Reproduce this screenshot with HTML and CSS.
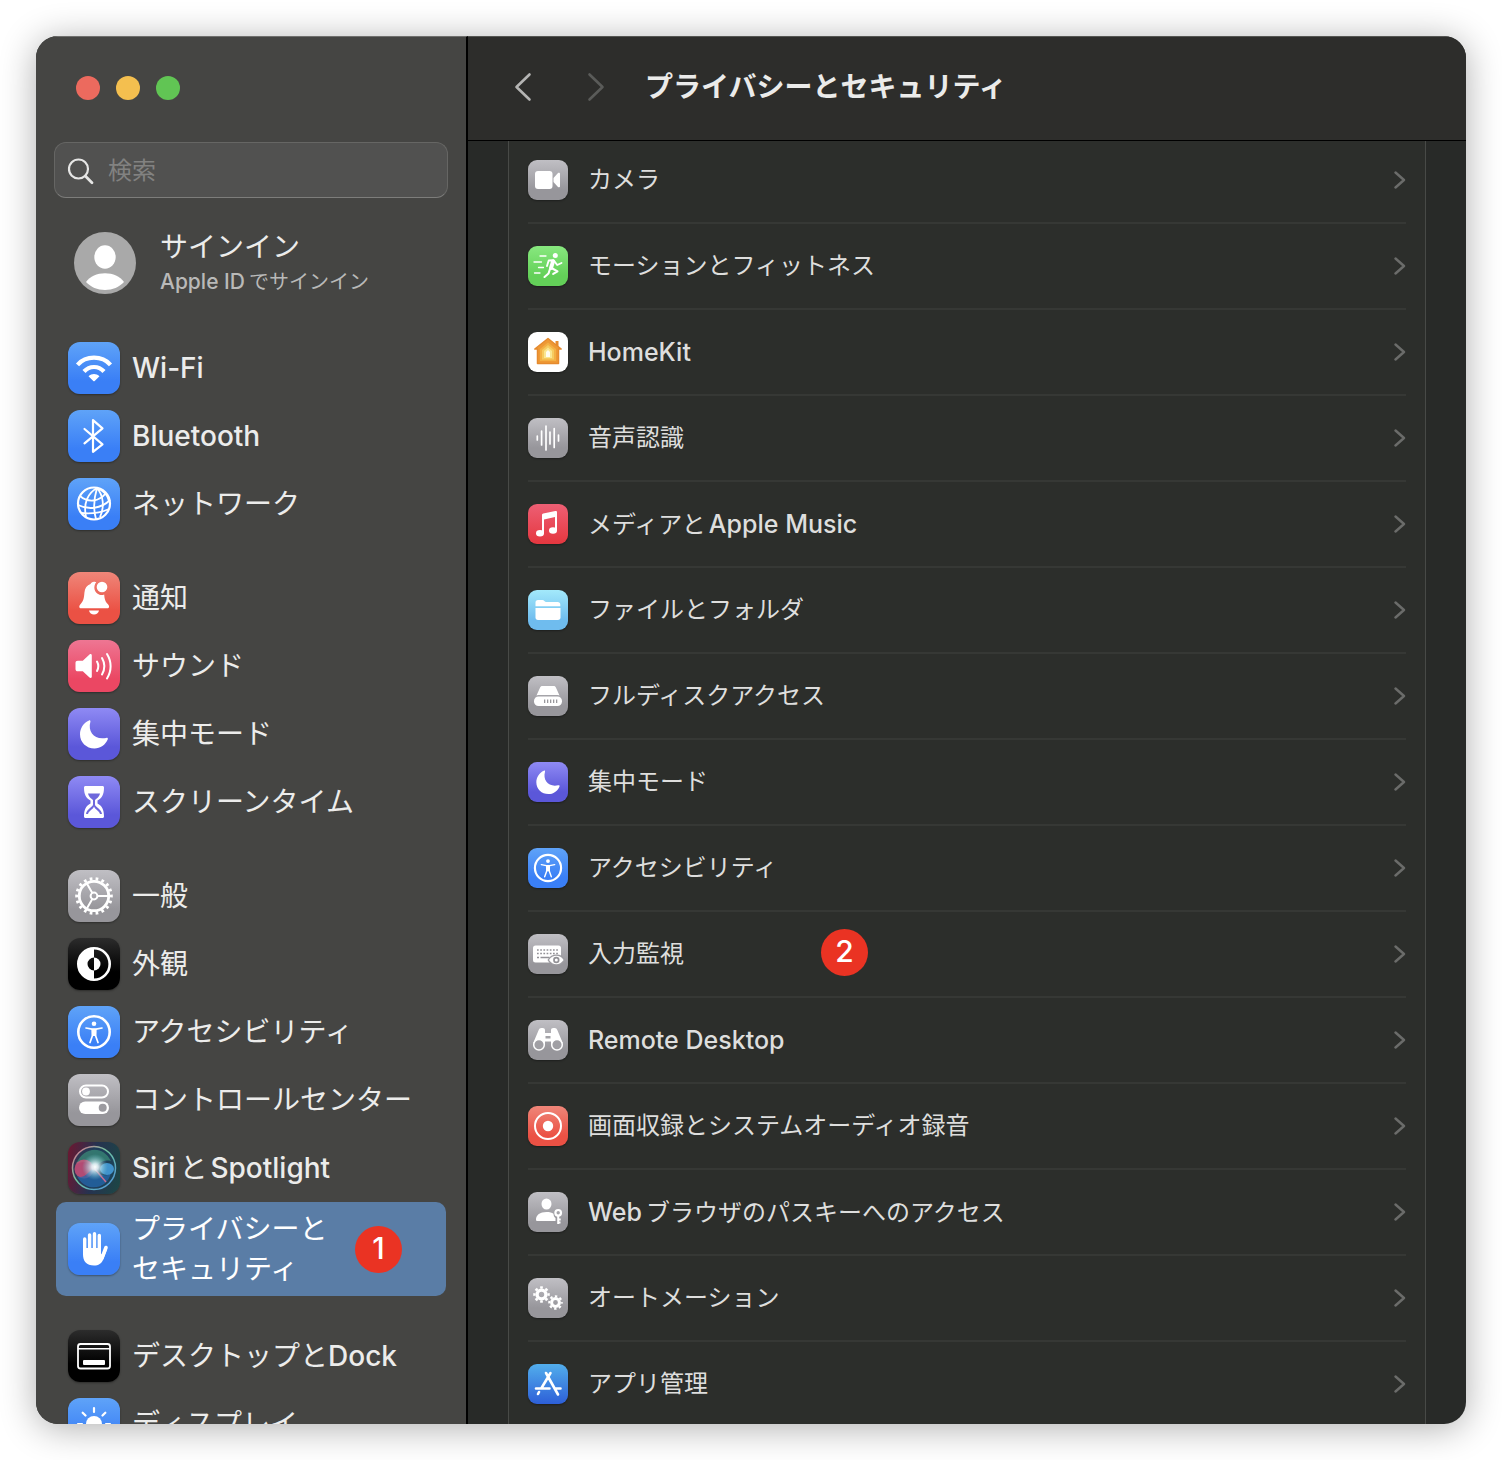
FILE: index.html
```html
<!DOCTYPE html>
<html lang="ja">
  <head>
    <meta charset="UTF-8" />
    <meta name="viewport" content="width=device-width, initial-scale=1.0" />
    <title>プライバシーとセキュリティ</title>
    <link rel="stylesheet" href="styles.css">
  </head>
  <body>
    <!-- Shared shapes -->
    <svg class="defs" width="0" height="0" aria-hidden="true">
      <symbol id="chevron" viewBox="0 0 12 20">
        <path d="M1.500 2.500l8.500 7.500-8.500 7.500" fill="none" stroke="currentColor" stroke-width="2.400" stroke-linecap="round" stroke-linejoin="round" />
      </symbol>
      <symbol id="moon" viewBox="0 0 52 52">
        <path d="M21 12.500c.8-.5 1.700.2 1.400 1.200-3 10.300 4.600 18.800 15.800 16.200 1.200-.3 2 .4 1.600 1.400C37.500 37 32.300 40.500 26.500 40.500 18.300 40.500 12 34.500 12 26.300c0-6 3.500-11.400 9-13.800z" fill="#fff" />
      </symbol>
      <symbol id="person" viewBox="0 0 52 52">
        <circle cx="26" cy="26" r="15.700" fill="none" stroke="#fff" stroke-width="2.600" />
        <circle cx="26" cy="17.700" r="2.300" fill="#fff" />
        <path d="M18 22l6 1.200h4L34 22M24.500 23.500v6L22 36.500M27.500 23.500v6l2.500 7" fill="none" stroke="#fff" stroke-width="1.700" stroke-linecap="round" stroke-linejoin="round" />
        <path d="M23.500 22.800h5l-.3 7.200h-4.400z" fill="#fff" />
      </symbol>
      <symbol id="cog" viewBox="0 0 20 20">
        <circle cx="10" cy="10" r="5.200" fill="none" stroke="#fff" stroke-width="4" />
        <circle cx="10" cy="10" r="8.300" fill="none" stroke="#fff" stroke-width="2.800" pathLength="16" stroke-dasharray="1 1" stroke-dashoffset=".5" />
      </symbol>
    </svg>

    <div class="window">
      <aside class="sidebar">
        <div class="lights">
          <button class="light red" aria-label="閉じる"></button>
          <button class="light yellow" aria-label="しまう"></button>
          <button class="light green" aria-label="拡大"></button>
        </div>

        <label class="search">
          <svg width="28" height="28" viewBox="0 0 28 28" aria-hidden="true">
            <circle cx="11.500" cy="12" r="9.500" fill="none" stroke="#e6e6e5" stroke-width="2.200" />
            <path d="M18.300 19l6.700 6.700" stroke="#e6e6e5" stroke-width="2.800" stroke-linecap="round" />
          </svg>
          <input type="search" placeholder="検索" aria-label="検索" />
        </label>

        <a class="account" href="#">
          <svg width="62" height="62" viewBox="0 0 62 62" aria-hidden="true">
            <circle cx="31" cy="31" r="31" fill="#a9a9a9" />
            <ellipse cx="31" cy="25" rx="10.700" ry="11.700" fill="#fff" />
            <path d="M12 50c4-5.500 11-8.700 19-8.700S46 44.500 50 50c-4.600 5-11.500 8-19 8s-14.400-3-19-8z" fill="#fff" />
          </svg>
          <span class="account-text">
            <span class="account-name">サインイン</span>
            <span class="account-sub"><span class="latin">Apple ID</span><span class="kana-after">で</span>サインイン</span>
          </span>
        </a>

        <nav>
          <div class="nav-group">
            <a class="nav-item" href="#">
              <span class="tile blue">
                <svg viewBox="0 0 52 52" aria-hidden="true">
                  <g fill="none" stroke="#fff" stroke-width="4.200">
                    <path d="M9.500 22.800C18 13.300 34 13.300 42.500 22.800" />
                    <path d="M16 29.500c5.500-6 14.500-6 20 0" />
                  </g>
                  <path d="M20.500 34.300c3.300-3 7.700-3 11 0L26.700 39c-.4.4-1 .4-1.400 0z" fill="#fff" />
                </svg>
              </span>
              <span class="latin">Wi-Fi</span>
            </a>
            <a class="nav-item" href="#">
              <span class="tile blue">
                <svg viewBox="0 0 52 52" aria-hidden="true">
                  <path d="M16.500 19l18 15.300L25 41.800V10.200l9.500 8.100-18 15" fill="none" stroke="#fff" stroke-width="2.200" stroke-linecap="round" stroke-linejoin="round" />
                </svg>
              </span>
              <span class="latin">Bluetooth</span>
            </a>
            <a class="nav-item" href="#">
              <span class="tile blue">
                <svg viewBox="0 0 52 52" fill="none" stroke="#fff" stroke-width="1.800" aria-hidden="true">
                  <circle cx="26" cy="25.500" r="16" stroke-width="2.200" />
                  <path d="M29 10C20 15 15 25 18 39M29 10C26 20 25 31 28 41M29 10c6 7 8 18 3 29M29 10c7 3 11 8 12 13" />
                  <path d="M12 18c8 7 19 6 26-3M10 27c10 5 23 4 32-5M13 35c8 1 19 0 28-4" />
                </svg>
              </span>
              ネットワーク
            </a>
          </div>

          <div class="nav-group">
            <a class="nav-item" href="#">
              <span class="tile red-tile">
                <svg viewBox="0 0 52 52" aria-hidden="true">
                  <path d="M26 9.800c1.200 0 1.800.2 2.200.5-3.300 4-2.200 10.700 3.300 12.400 1.700.5 3.300.3 4.700-.3.300 4.600 1 6.900 3.800 9.900 1.500 1.700 1.600 4-.6 4H13c-2.200 0-2.100-2.300-.6-4 3.200-3.500 3.600-6.300 4-11.500.4-4.700 2.600-7.600 6.100-8.700.5-1.200 1.700-2.300 3.500-2.300z" fill="#fff" />
                  <circle cx="34" cy="15" r="5.300" fill="#fff" />
                  <path d="M21 38.500h10c-.6 2.500-2.500 4-5 4s-4.400-1.500-5-4z" fill="#fff" />
                </svg>
              </span>
              通知
            </a>
            <a class="nav-item" href="#">
              <span class="tile pink">
                <svg viewBox="0 0 52 52" aria-hidden="true">
                  <path d="M7.500 23c0-1.500.8-2.300 2.300-2.300h5L21.500 14.500c1-.9 2.300-.5 2.300 1v21c0 1.500-1.300 1.900-2.300 1l-6.700-6.200h-5c-1.500 0-2.300-.8-2.300-2.300z" fill="#fff" />
                  <path d="M29 21.500c1.700 3 1.700 6.500 0 9.500M34 18c3 5.200 3 11.300 0 16.500M39 14c4.800 7.700 4.800 17 0 24.500" fill="none" stroke="#fff" stroke-width="2" stroke-linecap="round" />
                </svg>
              </span>
              サウンド
            </a>
            <a class="nav-item" href="#">
              <span class="tile indigo"><svg aria-hidden="true"><use href="#moon" /></svg></span>
              集中モード
            </a>
            <a class="nav-item" href="#">
              <span class="tile indigo">
                <svg viewBox="0 0 52 52" aria-hidden="true">
                  <path d="M16 11.500c0-.9.600-1.500 1.500-1.500h17c.9 0 1.500.6 1.500 1.500 0 7-2 10.500-6.500 13v3C34 30 36 33.500 36 40.500c0 .9-.6 1.500-1.500 1.500h-17c-.9 0-1.500-.6-1.500-1.500 0-7 2-10.500 6.500-13v-3C18 22 16 18.500 16 11.500z" fill="#fff" />
                  <path d="M20 17.500h12c-1 3.500-2.400 4.300-5 6.500v4.500c0 2.500 6.500 4.500 7 9.500H18c.5-5 7-7 7-9.500V24c-2.600-2.200-4-3-5-6.500z" fill="#6f68dc" />
                  <path d="M26 30.500c-1 3-5 4-6 7.500h12c-1-3.500-5-4.500-6-7.500z" fill="#fff" />
                </svg>
              </span>
              スクリーンタイム
            </a>
          </div>

          <div class="nav-group">
            <a class="nav-item" href="#">
              <span class="tile gray">
                <svg viewBox="0 0 52 52" fill="none" stroke="#fff" aria-hidden="true">
                  <circle cx="26" cy="26" r="14.700" stroke-width="2.800" />
                  <circle cx="26" cy="26" r="17.300" stroke-width="3" pathLength="36" stroke-dasharray=".9 1.100" stroke-dashoffset=".45" />
                  <circle cx="26" cy="26" r="3.400" stroke-width="2" />
                  <path d="M29.400 26H40M24.300 23l-5.300-9.200M24.300 29 19 38.200" stroke-width="2" />
                </svg>
              </span>
              一般
            </a>
            <a class="nav-item" href="#">
              <span class="tile black">
                <svg viewBox="0 0 52 52" aria-hidden="true">
                  <circle cx="26" cy="26" r="15.700" fill="none" stroke="#fff" stroke-width="2.600" />
                  <path d="M26 10v9.500a6.500 6.500 0 0 0 0 13V42a16 16 0 0 1 0-32z" fill="#fff" />
                  <path d="M26 19.500a6.500 6.500 0 0 1 0 13z" fill="#fff" />
                </svg>
              </span>
              外観
            </a>
            <a class="nav-item" href="#">
              <span class="tile blue"><svg aria-hidden="true"><use href="#person" /></svg></span>
              アクセシビリティ
            </a>
            <a class="nav-item" href="#">
              <span class="tile gray">
                <svg viewBox="0 0 52 52" aria-hidden="true">
                  <rect x="12" y="11.500" width="28" height="12" rx="6" fill="none" stroke="#fff" stroke-width="2" />
                  <circle cx="18" cy="17.500" r="3.900" fill="#fff" />
                  <rect x="11" y="27.500" width="30" height="12.500" rx="6.200" fill="#fff" />
                  <circle cx="34.700" cy="33.700" r="4" fill="#9c9ba0" />
                </svg>
              </span>
              コントロールセンター
            </a>
            <a class="nav-item" href="#">
              <span class="tile siri">
                <svg viewBox="0 0 52 52" aria-hidden="true">
                  <defs>
                    <radialGradient id="orb"><stop offset="0" stop-color="#fff" /><stop offset=".25" stop-color="#e8f6fb" stop-opacity=".9" /><stop offset="1" stop-color="#6fc6d0" stop-opacity="0" /></radialGradient>
                    <linearGradient id="rim" x2="1" y2="1"><stop offset="0" stop-color="#e06a8e" /><stop offset=".45" stop-color="#6fc59f" /><stop offset="1" stop-color="#4b8fe0" /></linearGradient>
                  </defs>
                  <circle cx="26" cy="26" r="21.500" fill="#1d4560" fill-opacity=".6" stroke="url(#rim)" stroke-width="1.500" />
                  <path d="M8 22c8-18 27-19 35-3-9-2-12 3-16 7-5-6-10-8-19-4z" fill="#3f9c7f" fill-opacity=".6" />
                  <ellipse cx="16" cy="27" rx="9.500" ry="9.500" fill="#e0517f" fill-opacity=".75" />
                  <path d="M9 34c6 3 10-2 15-7 4 5 14 9 19 4-4 17-26 20-34 3z" fill="#2468ac" fill-opacity=".75" />
                  <ellipse cx="39" cy="27" rx="7" ry="6" fill="#4aa7ea" fill-opacity=".8" />
                  <path d="M26 26l12 14" stroke="#c96b93" stroke-width="1.500" />
                  <circle cx="27" cy="25" r="13" fill="url(#orb)" />
                </svg>
              </span>
              <span><span class="latin">Siri</span><span class="kana-after kana-before">と</span><span class="latin">Spotlight</span></span>
            </a>
            <a class="nav-item selected" href="#" aria-current="page">
              <span class="tile blue">
                <svg viewBox="0 0 52 52" aria-hidden="true">
                  <g fill="none" stroke="#fff" stroke-width="3.400" stroke-linecap="round">
                    <path d="M16.700 16v15M21.600 12v16M26.500 10.800V28M31.300 12.500V30" />
                    <path d="M38 24.500L34 35" stroke-width="3.600" />
                  </g>
                  <path d="M15 25h18v5.500c0 1 1 1 1.500.2l2.300-4.700 2 1-3.600 9.500C33.500 40.800 30.500 42.500 26 42.500 18.500 42.500 15 38.500 15 31z" fill="#fff" />
                </svg>
              </span>
              <span>プライバシーと<br />セキュリティ</span>
              <span class="badge">1</span>
            </a>
          </div>

          <div class="nav-group">
            <a class="nav-item" href="#">
              <span class="tile black">
                <svg viewBox="0 0 52 52" aria-hidden="true">
                  <rect x="10" y="14" width="32" height="24.500" rx="2.500" fill="none" stroke="#fff" stroke-width="1.800" />
                  <path d="M10 18.700h32" stroke="#fff" stroke-width="1.500" />
                  <rect x="15" y="30" width="22" height="5" rx="1" fill="#fff" />
                </svg>
              </span>
              <span>デスクトップ<span>と</span><span class="latin">Dock</span></span>
            </a>
            <a class="nav-item" href="#">
              <span class="tile blue">
                <svg viewBox="0 0 52 52" aria-hidden="true">
                  <circle cx="26" cy="26" r="8" fill="#fff" />
                  <path d="M26 10v4M26 38v4M10 26h4M38 26h4M14.700 14.700l2.800 2.800M34.500 34.500l2.800 2.800M37.300 14.700l-2.800 2.800M17.500 34.500l-2.800 2.800" stroke="#fff" stroke-width="2.200" stroke-linecap="round" />
                </svg>
              </span>
              ディスプレイ
            </a>
          </div>
        </nav>
      </aside>

      <main class="content">
        <header class="toolbar">
          <button class="nav-button back" aria-label="戻る">
            <svg width="20" height="32" viewBox="0 0 20 32" aria-hidden="true"><path d="M16.500 3.500L3.500 16l13 12.500" /></svg>
          </button>
          <button class="nav-button forward" aria-label="進む" disabled>
            <svg width="20" height="32" viewBox="0 0 20 32" aria-hidden="true"><path d="M3.500 3.500L16.500 16l-13 12.500" /></svg>
          </button>
          <h1>プライバシーとセキュリティ</h1>
        </header>

        <div class="pane">
          <div class="list">
            <a class="row" href="#">
              <span class="tile gray">
                <svg viewBox="0 0 40 40" aria-hidden="true">
                  <rect x="7" y="11" width="17.500" height="18" rx="3" fill="#fff" />
                  <path d="M25.500 18l4.500-5c.8-.7 2-.4 2 .8v12.400c0 1.200-1.200 1.500-2 .8l-4.500-5z" fill="#fff" />
                </svg>
              </span>
              <span>カメラ</span>
              <svg class="chevron" aria-hidden="true"><use href="#chevron" /></svg>
            </a>
            <a class="row" href="#">
              <span class="tile green-tile">
                <svg viewBox="0 0 40 40" fill="none" stroke="#fff" stroke-linecap="round" stroke-linejoin="round" aria-hidden="true">
                  <circle cx="27.300" cy="9.400" r="2.500" fill="#fff" stroke="none" />
                  <path d="M19 20l1.700-5.500 5-.2 3.500 4.700 4.300-2" stroke-width="1.900" />
                  <path d="M25 15.500l-2 6.500" stroke-width="4" />
                  <path d="M23.500 22l6 3.300-4.300 2.600M22 23l-1.500 4.500L16.500 31" stroke-width="2.100" />
                  <path d="M12 10h6M6 16h7.500M10.500 21.500h5M6.500 27h5.500" stroke-width="1.300" />
                </svg>
              </span>
              <span>モーションとフィットネス</span>
              <svg class="chevron" aria-hidden="true"><use href="#chevron" /></svg>
            </a>
            <a class="row" href="#">
              <span class="tile white">
                <svg viewBox="0 0 40 40" stroke-linejoin="round" aria-hidden="true">
                  <path d="M27.500 9h3v7h-3z" fill="#e58a2e" />
                  <path d="M20 6.500L6.800 17h2.700v14.500h21V17h2.700z" fill="#ee9935" stroke="#e58a2e" stroke-width="1.500" />
                  <path d="M20 10.500l-8 6.500v12h16V17z" fill="#f3b044" />
                  <path d="M20 13l-6 5v9.500h12V18z" fill="#f6cb60" />
                  <path d="M20 15.500L16 19v7h8v-7z" fill="#fae691" />
                  <path d="M20 18l-2 2v5h4v-5z" fill="#fffdf0" />
                </svg>
              </span>
              <span class="latin">HomeKit</span>
              <svg class="chevron" aria-hidden="true"><use href="#chevron" /></svg>
            </a>
            <a class="row" href="#">
              <span class="tile gray">
                <svg viewBox="0 0 40 40" aria-hidden="true">
                  <path d="M9.300 18v4M13.600 13v14M18 8v24M22 14v12M26.200 10.500v19M30.500 17v6" stroke="#fff" stroke-width="1.700" stroke-linecap="round" />
                </svg>
              </span>
              <span>音声認識</span>
              <svg class="chevron" aria-hidden="true"><use href="#chevron" /></svg>
            </a>
            <a class="row" href="#">
              <span class="tile music">
                <svg viewBox="0 0 40 40" fill="#fff" aria-hidden="true">
                  <path d="M14 11.200c0-.9.500-1.400 1.300-1.600l12-2.500c1.100-.2 1.700.3 1.700 1.300V26h-2V13l-11 2.400V29h-2z" />
                  <ellipse cx="12" cy="29.300" rx="4" ry="3.200" />
                  <ellipse cx="25" cy="26.500" rx="4" ry="3.200" />
                </svg>
              </span>
              <span>メディア<span class="kana-before">と</span><span class="latin">Apple Music</span></span>
              <svg class="chevron" aria-hidden="true"><use href="#chevron" /></svg>
            </a>
            <a class="row" href="#">
              <span class="tile sky">
                <svg viewBox="0 0 40 40" fill="#fff" aria-hidden="true">
                  <path d="M7.500 16.200V12.500c0-1.500.9-2.500 2.500-2.500h4.500c1.500 0 2.300 2 3.700 2h11.500c1.600 0 2.600 1 2.600 2.500v1.700z" />
                  <path d="M7.500 18h25v9.500c0 1.600-1 2.500-2.600 2.500H10c-1.600 0-2.500-.9-2.500-2.500z" />
                </svg>
              </span>
              <span>ファイルとフォルダ</span>
              <svg class="chevron" aria-hidden="true"><use href="#chevron" /></svg>
            </a>
            <a class="row" href="#">
              <span class="tile gray">
                <svg viewBox="0 0 40 40" aria-hidden="true">
                  <path d="M12 11.700c.4-1.100 1.200-1.700 2.400-1.700h11.200c1.200 0 2 .6 2.400 1.700l3.500 7.800c-1.200-.4-2-.5-3-.5h-17c-1 0-1.800.1-3 .5z" fill="#fff" />
                  <rect x="6" y="20.500" width="28" height="9.500" rx="4.500" fill="#fff" />
                  <path d="M16.700 23.500v3.500M19.700 23.500v3.500M22.700 23.500v3.500M25.700 23.500v3.500M28.700 23.500v3.500" stroke="#88878c" stroke-width="1.100" />
                </svg>
              </span>
              <span>フルディスクアクセス</span>
              <svg class="chevron" aria-hidden="true"><use href="#chevron" /></svg>
            </a>
            <a class="row" href="#">
              <span class="tile indigo"><svg viewBox="2 2 48 48" aria-hidden="true"><use href="#moon" width="52" height="52" /></svg></span>
              <span>集中モード</span>
              <svg class="chevron" aria-hidden="true"><use href="#chevron" /></svg>
            </a>
            <a class="row" href="#">
              <span class="tile blue"><svg viewBox="2 2 48 48" aria-hidden="true"><use href="#person" width="52" height="52" /></svg></span>
              <span>アクセシビリティ</span>
              <svg class="chevron" aria-hidden="true"><use href="#chevron" /></svg>
            </a>
            <a class="row" href="#">
              <span class="tile gray">
                <svg viewBox="0 0 40 40" aria-hidden="true">
                  <rect x="5" y="11.500" width="28" height="17" rx="2.500" fill="#fff" />
                  <path d="M9 16h21M9 19.500h21" stroke="#929196" stroke-width="1.700" stroke-dasharray="1.700 1.500" />
                  <path d="M9 23.500h2M12.500 23.500h9" stroke="#929196" stroke-width="1.600" />
                  <path d="M19.500 26c2-3.700 5.300-5.500 9-5.500s7 1.800 9 5.500c-2 3.700-5.300 5.500-9 5.500s-7-1.800-9-5.500z" fill="#9c9ba0" />
                  <path d="M21 26c1.800-2.800 4.500-4.200 7.300-4.200s5.500 1.400 7.300 4.200c-1.800 2.800-4.500 4.200-7.300 4.200S22.800 28.800 21 26z" fill="#fff" />
                  <circle cx="28.300" cy="26" r="3.200" fill="#929196" />
                  <circle cx="28.300" cy="26" r="1.500" fill="#fff" />
                </svg>
              </span>
              <span>入力監視</span>
              <span class="badge">2</span>
              <svg class="chevron" aria-hidden="true"><use href="#chevron" /></svg>
            </a>
            <a class="row" href="#">
              <span class="tile gray">
                <svg viewBox="0 0 40 40" aria-hidden="true">
                  <path d="M5 23.500L10.700 10c.5-1.300 1.300-2 2.600-2h1.400c1.400 0 2.300.8 2.300 2.200V13h6v-2.800C23 8.800 23.900 8 25.300 8h1.400c1.300 0 2.100.7 2.600 2L35 23.500l-12 1v-3h-6v3z" fill="#fff" />
                  <path d="M17.500 16h5v2.500h-5z" fill="#a3a2a7" />
                  <circle cx="11" cy="24.700" r="5.300" fill="#a09fa4" stroke="#fff" stroke-width="1.500" />
                  <circle cx="29" cy="24.700" r="5.300" fill="#a09fa4" stroke="#fff" stroke-width="1.500" />
                </svg>
              </span>
              <span class="latin">Remote Desktop</span>
              <svg class="chevron" aria-hidden="true"><use href="#chevron" /></svg>
            </a>
            <a class="row" href="#">
              <span class="tile red-tile">
                <svg viewBox="0 0 40 40" aria-hidden="true">
                  <circle cx="20" cy="20" r="13" fill="none" stroke="#fff" stroke-width="2" />
                  <circle cx="20" cy="20" r="5.200" fill="#fff" />
                </svg>
              </span>
              <span>画面収録とシステムオーディオ録音</span>
              <svg class="chevron" aria-hidden="true"><use href="#chevron" /></svg>
            </a>
            <a class="row" href="#">
              <span class="tile gray">
                <svg viewBox="0 0 40 40" aria-hidden="true">
                  <ellipse cx="18.500" cy="12" rx="5" ry="5.500" fill="#fff" />
                  <path d="M8 27.500c0-4.500 4-7.500 10.500-7.500 3.300 0 5.500.6 7 1.800 0 2 .7 3.300 2 4.200v3H9.500c-1 0-1.500-.5-1.500-1.500z" fill="#fff" />
                  <circle cx="30.200" cy="20.800" r="2.800" fill="none" stroke="#fff" stroke-width="2.200" />
                  <path d="M30.200 24v8M30.500 27.500h2.200M30.500 30.500h2" stroke="#fff" stroke-width="2" />
                </svg>
              </span>
              <span><span class="latin">Web</span><span class="kana-after">ブ</span>ラウザのパスキーへのアクセス</span>
              <svg class="chevron" aria-hidden="true"><use href="#chevron" /></svg>
            </a>
            <a class="row" href="#">
              <span class="tile gray">
                <svg viewBox="0 0 40 40" aria-hidden="true">
                  <use href="#cog" x="5" y="8" width="17" height="17" />
                  <use href="#cog" x="20" y="17" width="15" height="15" />
                </svg>
              </span>
              <span>オートメーション</span>
              <svg class="chevron" aria-hidden="true"><use href="#chevron" /></svg>
            </a>
            <a class="row" href="#">
              <span class="tile store">
                <svg viewBox="0 0 40 40" fill="none" stroke="#fff" stroke-width="2.600" stroke-linecap="round" aria-hidden="true">
                  <path d="M18 9l12 21.500M22.500 9L13.500 24M11 28l-1 2M8 24.500h13.500M28 24.500h4.500" />
                </svg>
              </span>
              <span>アプリ管理</span>
              <svg class="chevron" aria-hidden="true"><use href="#chevron" /></svg>
            </a>
          </div>
        </div>
      </main>
    </div>
  </body>
</html>
```
FILE: styles.css
```css
* {
  box-sizing: border-box;
}
body {
  margin: 0;
  padding: 36px;
  height: 100vh;
  background-color: white;
  font-family: Inter, "Noto Sans CJK JP", sans-serif;
}
a {
  color: inherit;
  text-decoration: none;
}
button {
  padding: 0;
  border: none;
  background: none;
}
.defs {
  position: absolute;
}
.latin {
  font-weight: 500;
}
.window {
  display: flex;
  height: 100%;
  overflow: hidden;
  border-radius: 22px;
  background-color: #282a28;
  box-shadow: 0 4px 36px rgba(0, 0, 0, 0.32);
}

/* Sidebar */
.sidebar {
  flex: 0 0 432px;
  padding: 40px 18px 0;
  border-right: 2px solid black;
  border-top: 1px solid #70706e;
  background-color: #454543;
  color: #ececeb;
  font-size: 28px;
  overflow: hidden;
}
.lights {
  display: flex;
  gap: 16px;
  margin: -1px 0 42px 22px;
}
.light {
  width: 24px;
  height: 24px;
  border-radius: 50%;
}
.red {
  background-color: #ec6a5e;
}
.yellow {
  background-color: #f4bf4f;
}
.green {
  background-color: #61c554;
}
.search {
  display: flex;
  align-items: center;
  gap: 13px;
  height: 56px;
  padding: 1px 12px 0;
  border: 1px solid #666664;
  border-bottom-color: #7d7d7b;
  border-radius: 12px;
  background-color: #515150;
}
.search input {
  flex: 1;
  min-width: 0;
  padding: 0;
  border: none;
  outline: none;
  background: none;
  color: #ececeb;
  font-family: inherit;
  font-size: 24px;
}
.search input::placeholder {
  color: #828281;
}
.account {
  display: flex;
  align-items: center;
  gap: 24px;
  height: 62px;
  margin: 34px 0 40px 20px;
}
.account-text {
  display: flex;
  flex-direction: column;
  padding-top: 2px;
}
.account-name {
  line-height: 36px;
}
.account-sub {
  color: #b9b9b8;
  font-size: 20px;
  line-height: 34px;
}
.account-sub .latin {
  font-size: 21px;
}
.nav-group {
  margin: 0 2px 26px;
}
.nav-item {
  position: relative;
  display: flex;
  align-items: center;
  gap: 12px;
  min-height: 68px;
  padding: 0 12px;
  line-height: 40px;
  white-space: nowrap;
}
.selected {
  min-height: 94px;
  border-radius: 10px;
  background-color: #5a7da6;
  color: white;
}
.kana-before {
  margin-right: 3px;
}
.kana-after {
  margin-left: 4px;
}
.badge {
  position: absolute;
  left: 299px;
  width: 47px;
  height: 47px;
  border-radius: 50%;
  background-color: #ea3323;
  color: white;
  font-size: 30px;
  font-weight: 500;
  line-height: 45px;
  text-align: center;
}

/* Icon tiles */
.tile {
  flex: none;
  width: 52px;
  height: 52px;
  border-radius: 12px;
  box-shadow: 0 1px 2px rgba(0, 0, 0, 0.35);
}
.tile svg {
  display: block;
  width: 100%;
  height: 100%;
}
.blue {
  background: linear-gradient(#5fa3f8, #3a7ff6 75%);
}
.red-tile {
  background: linear-gradient(#ef8679, #eb5144 75%);
}
.pink {
  background: linear-gradient(#ee7693, #eb4763 75%);
}
.indigo {
  background: linear-gradient(#8f8af4, #5b57d9 75%);
}
.gray {
  background: linear-gradient(#c0bfc4, #97969b 75%);
}
.black {
  background: linear-gradient(#2c2c2c, black 65%);
}
.siri {
  background: linear-gradient(100deg, #6d1730, #263250 48%, #1c4745);
}
.green-tile {
  background: linear-gradient(#88e87f, #63d058 75%);
}
.white {
  background: white;
}
.music {
  background: linear-gradient(#ed5f74, #e5373f);
}
.sky {
  background: linear-gradient(#a3e9fb, #6fbcee 75%);
}
.store {
  background: linear-gradient(#52aeec, #2d5fd8);
}

/* Main pane */
.content {
  flex: 1;
  display: flex;
  flex-direction: column;
  min-width: 0;
  border-top: 1px solid #555653;
  color: #dededd;
  font-size: 24px;
}
.toolbar {
  flex: none;
  display: flex;
  align-items: center;
  height: 104px;
  padding: 0 45px 4px;
  border-bottom: 1px solid black;
  background-color: #2d2d2b;
}
.toolbar h1 {
  margin: 0 0 0 39px;
  color: #ebebea;
  font-size: 28px;
  font-weight: 700;
  line-height: 40px;
}
.nav-button {
  height: 32px;
}
.nav-button svg {
  display: block;
  fill: none;
  stroke: #b4b4b3;
  stroke-width: 2.6;
  stroke-linecap: round;
  stroke-linejoin: round;
}
.forward {
  margin-left: 53px;
}
.forward svg {
  stroke: #5a5b59;
}
.pane {
  flex: 1;
  min-height: 0;
  padding: 0 40px;
  overflow: hidden;
}
.list {
  margin-top: -3px;
  padding: 0 19px;
  border: solid #484a47;
  border-width: 0 1px;
  background-color: #2c2e2b;
}
.row {
  position: relative;
  display: flex;
  align-items: center;
  gap: 20px;
  height: 86px;
  border-bottom: 2px solid #363835;
  line-height: 40px;
  white-space: nowrap;
}
.row .latin {
  font-size: 25px;
}
.row .tile {
  width: 40px;
  height: 40px;
  border-radius: 9px;
}
.row .badge {
  top: 17px;
  left: 293px;
}
.chevron {
  width: 12px;
  height: 20px;
  margin-left: auto;
  color: #6b6c6a;
}
```
